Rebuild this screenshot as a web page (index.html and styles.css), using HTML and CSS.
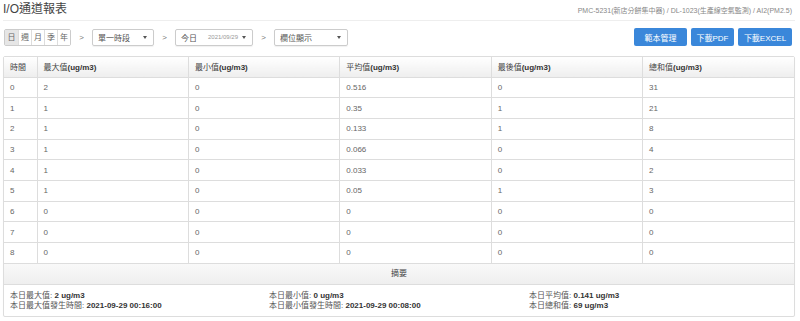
FILE: index.html
```html
<!DOCTYPE html>
<html lang="zh-Hant">
<head>
  <meta charset="UTF-8" />
  <title>I/O通道報表</title>
  <link rel="stylesheet" href="styles.css">
</head>
<body>
  <!-- 標題列 -->
  <div class="page-head">
    <div class="page-title">I/O通道報表</div>
    <div class="crumb">PMC-5231(新店分餅集中器) / DL-1023(生產線空氣監測) / AI2(PM2.5)</div>
  </div>

  <!-- 工具列 -->
  <div class="toolbar">
    <div class="btn-group">
      <span class="seg active">日</span>
      <span class="seg">週</span>
      <span class="seg">月</span>
      <span class="seg">季</span>
      <span class="seg">年</span>
    </div>
    <span class="step">&gt;</span>
    <div class="select w-range">
      <span>單一時段</span>
      <span class="caret"></span>
    </div>
    <span class="step">&gt;</span>
    <div class="select w-date">
      <span>今日</span>
      <span class="date">2021/09/29</span>
      <span class="caret"></span>
    </div>
    <span class="step">&gt;</span>
    <div class="select w-cols">
      <span>欄位顯示</span>
      <span class="caret"></span>
    </div>
    <div class="actions">
      <button class="btn b-tpl">範本管理</button>
      <button class="btn b-pdf">下載PDF</button>
      <button class="btn b-xls">下載EXCEL</button>
    </div>
  </div>

  <!-- 報表 -->
  <div class="report">
    <table class="grid">
      <thead>
        <tr>
          <th class="c-time">時間</th>
          <th>最大值<b>(ug/m3)</b></th>
          <th>最小值<b>(ug/m3)</b></th>
          <th>平均值<b>(ug/m3)</b></th>
          <th>最後值<b>(ug/m3)</b></th>
          <th>總和值<b>(ug/m3)</b></th>
        </tr>
      </thead>
      <tbody>
        <tr><td>0</td><td>2</td><td>0</td><td>0.516</td><td>0</td><td>31</td></tr>
        <tr><td>1</td><td>1</td><td>0</td><td>0.35</td><td>1</td><td>21</td></tr>
        <tr><td>2</td><td>1</td><td>0</td><td>0.133</td><td>1</td><td>8</td></tr>
        <tr><td>3</td><td>1</td><td>0</td><td>0.066</td><td>0</td><td>4</td></tr>
        <tr><td>4</td><td>1</td><td>0</td><td>0.033</td><td>0</td><td>2</td></tr>
        <tr><td>5</td><td>1</td><td>0</td><td>0.05</td><td>1</td><td>3</td></tr>
        <tr><td>6</td><td>0</td><td>0</td><td>0</td><td>0</td><td>0</td></tr>
        <tr><td>7</td><td>0</td><td>0</td><td>0</td><td>0</td><td>0</td></tr>
        <tr><td>8</td><td>0</td><td>0</td><td>0</td><td>0</td><td>0</td></tr>
      </tbody>
    </table>

    <div class="summary-head">摘要</div>
    <div class="summary">
      <div>
        <div>本日最大值: <b>2 ug/m3</b></div>
        <div>本日最大值發生時間: <b>2021-09-29 00:16:00</b></div>
      </div>
      <div>
        <div>本日最小值: <b>0 ug/m3</b></div>
        <div>本日最小值發生時間: <b>2021-09-29 00:08:00</b></div>
      </div>
      <div>
        <div>本日平均值: <b>0.141 ug/m3</b></div>
        <div>本日總和值: <b>69 ug/m3</b></div>
      </div>
    </div>
  </div>
</body>
</html>
```

FILE: styles.css
```css
* {
  box-sizing: border-box;
}

body {
  margin: 0;
  padding: 0 5px 0 3px;
  font-family: "Liberation Sans", Arial, "Noto Sans CJK TC", sans-serif;
  font-size: 8px;
  color: #555;
  background-color: #fff;
}

.page-head {
  display: flex;
  justify-content: space-between;
  align-items: flex-start;
  height: 21px;
  border-bottom: 1px solid #eee;
}

.page-title {
  font-size: 12px;
  color: #444;
  line-height: 16px;
  padding-top: 1px;
}

.crumb {
  font-size: 7px;
  color: #888;
  padding-top: 5px;
  padding-right: 3px;
}

.toolbar {
  display: flex;
  align-items: center;
  height: 18px;
  margin-top: 7px;
}

.btn-group {
  display: flex;
  margin-left: 1px;
  border: 1px solid #ccc;
  border-radius: 2px;
  height: 17px;
}

.seg {
  width: 13px;
  line-height: 15px;
  text-align: center;
  color: #666;
  border-left: 1px solid #ddd;
  background-color: #fff;
}

.seg:first-child {
  border-left: none;
}

.seg.active {
  background-color: #e6e6e6;
}

.step {
  width: 21px;
  text-align: center;
  color: #777;
}

.select {
  display: flex;
  align-items: center;
  height: 17px;
  padding: 0 6px 0 5px;
  border: 1px solid #ccc;
  border-radius: 2px;
  box-shadow: 0 1px 1px rgba(0, 0, 0, 0.06);
  color: #555;
}

.select .date {
  margin-left: auto;
  margin-right: 4px;
  font-size: 6px;
  color: #999;
}

.caret {
  margin-left: auto;
  width: 0;
  height: 0;
  border-left: 2px solid transparent;
  border-right: 2px solid transparent;
  border-top: 3px solid #555;
}

.select .date + .caret {
  margin-left: 0;
}

.w-range {
  width: 62px;
}

.w-date {
  width: 78px;
}

.w-cols {
  width: 74px;
}

.actions {
  margin-left: auto;
  display: flex;
  gap: 4px;
  padding-right: 3px;
}

.btn {
  height: 18px;
  padding: 0;
  border: none;
  border-radius: 2px;
  background-color: #3a87da;
  color: #fff;
  font-family: inherit;
  font-size: 8px;
}

.b-tpl {
  width: 53px;
}

.b-pdf {
  width: 43px;
}

.b-xls {
  width: 54px;
}

.report {
  margin-top: 10px;
  border: 1px solid #ddd;
  border-radius: 2px;
  box-shadow: 0 1px 1px rgba(0, 0, 0, 0.05);
}

.grid {
  width: 100%;
  border-collapse: collapse;
  table-layout: fixed;
}

.grid th,
.grid td {
  text-align: left;
  padding: 0 6px;
  border-left: 1px solid #ddd;
  border-bottom: 1px solid #ddd;
  color: #666;
  font-weight: normal;
}

.grid th:first-child,
.grid td:first-child {
  border-left: none;
}

.grid th {
  height: 20px;
  background: linear-gradient(#ffffff, #eeeeee);
  color: #444;
}

.grid th b {
  color: #333;
}

.grid th.c-time {
  width: 33px;
}

.grid td {
  height: 20.7px;
}

.summary-head {
  height: 21px;
  line-height: 20px;
  text-align: center;
  background: linear-gradient(#f9f9f9, #efefef);
  border-bottom: 1px solid #ddd;
  color: #444;
}

.summary {
  display: grid;
  grid-template-columns: 259px 260px 1fr;
  padding: 6px 6px 5px 6px;
  line-height: 10px;
  color: #555;
}

.summary b {
  color: #333;
}
```
